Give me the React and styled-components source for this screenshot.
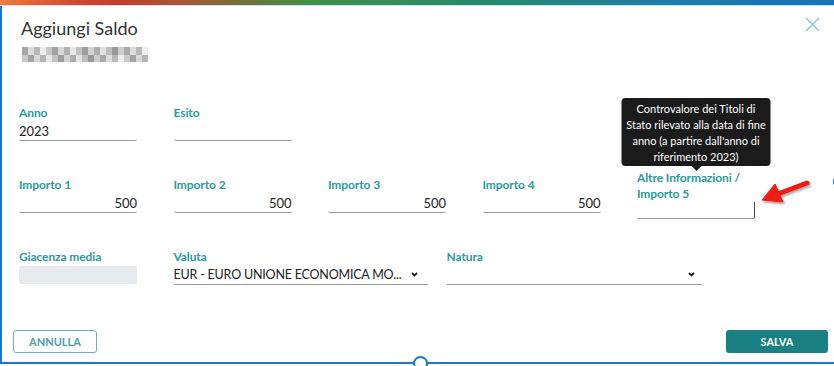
import React from 'react'
import styled, { createGlobalStyle } from 'styled-components'

// pixelated (blurred) subtitle cells, 2 rows x 21 cols
const blurCells = Array.from({ length: 42 }, (_, i) => {
  const g = 150 + ((i * 53 + 17) % 90)
  return `rgb(${g}, ${g}, ${g})`
})

const Chevron = () => (
  <svg width='7' height='5' viewBox='0 0 7 5'>
    <polyline points='1,1 3.5,3.5 6,1' fill='none' stroke='#222' strokeWidth='1.8' />
  </svg>
)

const Field = ({ label, value, align, width, offset, h, caret, children }) => (
  <FieldBox $width={width} $offset={offset}>
    {children}
    <Label>{label}</Label>
    <Input $align={align} $h={h}>
      {value}
      {caret && <Caret />}
    </Input>
  </FieldBox>
)

const SelectField = ({ label, value, width, pr, ml }) => (
  <FieldBox $width={width} $ml={ml}>
    <Label>{label}</Label>
    <Select $pr={pr}>
      <SelectText>{value}</SelectText>
      <Chevron />
    </Select>
  </FieldBox>
)

export default function App() {
  return (
    <>
      <GlobalStyle />
      <Page>
        <Frame>
          <TopBar />
          <Header>
            <div>
              <Title>Aggiungi Saldo</Title>
              <Blurred>
                {blurCells.map((c, i) => (
                  <Cell key={i} style={{ background: c }} />
                ))}
              </Blurred>
            </div>
            <CloseButton>
              <svg width='15' height='15' viewBox='0 0 15 15'>
                <path d='M1 1 L14 14 M14 1 L1 14' stroke='#8fd0d0' strokeWidth='1.6' />
              </svg>
            </CloseButton>
          </Header>
          <Body>
            <Row $mt={43}>
              <Field label='Anno' value='2023' />
              <Field label='Esito' />
            </Row>
            <Row $mt={29}>
              {[1, 2, 3, 4].map(n => (
                <Field key={n} label={`Importo ${n}`} value='500' align='right' offset={7} />
              ))}
              <Field
                label={
                  <>
                    Altre Informazioni /<br />
                    Importo 5
                  </>
                }
                align='right'
                h={16}
                caret
              >
                <Tooltip>
                  Controvalore dei Titoli di Stato rilevato alla data di fine anno (a partire
                  dall'anno di riferimento 2023)
                </Tooltip>
              </Field>
            </Row>
            <Row $mt={30}>
              <FieldBox>
                <Label>Giacenza media</Label>
                <Disabled />
              </FieldBox>
              <SelectField label='Valuta' value='EUR - EURO UNIONE ECONOMICA MO...' width={254} pr={10} />
              <SelectField label='Natura' value='' width={255} pr={7} ml={-17.5} />
            </Row>
          </Body>
          <Footer>
            <OutlineButton>ANNULLA</OutlineButton>
            <PrimaryButton>SALVA</PrimaryButton>
          </Footer>
          <RedArrow width='60' height='40' viewBox='0 0 60 40'>
            <defs>
              <filter id='sh' x='-20%' y='-20%' width='160%' height='160%'>
                <feDropShadow dx='1.5' dy='2' stdDeviation='1.2' floodColor='#000' floodOpacity='0.35' />
              </filter>
            </defs>
            <g filter='url(#sh)' fill='#ee1c14' stroke='#ee1c14'>
              <line x1='52' y1='10' x2='24' y2='20.5' strokeWidth='5' strokeLinecap='round' />
              <polygon points='7,27 20,11 28,29' strokeWidth='1' strokeLinejoin='round' />
            </g>
          </RedArrow>
          <Handle $pos='bottom' />
          <Handle $pos='right' />
        </Frame>
      </Page>
    </>
  )
}

const GlobalStyle = createGlobalStyle`
  body {
    margin: 0;
    background: #fff;
    font-family: Lato, 'Open Sans', sans-serif;
  }
`

const Page = styled.div`
  width: 834px;
  height: 366px;
  overflow: hidden;
  background: #fff;
`

const Frame = styled.div`
  position: relative;
  box-sizing: border-box;
  width: 840px;
  height: 364px;
  display: flex;
  flex-direction: column;
  border-left: 2px solid #1a79c6;
  border-right: 2px solid #1a79c6;
  border-bottom: 2px solid #1a79c6;
  background: #fff;
`

const TopBar = styled.div`
  height: 5px;
  margin-left: -2px;
  margin-right: -2px;
  border-bottom: 1px solid #cfe4f4;
  background: linear-gradient(
    to right,
    #f07a3c 0%,
    #d04a30 9%,
    #c23c2c 14%,
    #a65838 22%,
    #7a6c3a 28%,
    #3f9048 37%,
    #26896f 60%,
    #1c7fa4 78%,
    #1571c0 100%
  );
`

const Header = styled.div`
  display: flex;
  align-items: flex-start;
  justify-content: space-between;
  padding: 11px 18px 0 19px;
`

const Title = styled.h1`
  margin: 0;
  font-size: 18px;
  line-height: 22px;
  font-weight: 400;
  color: #333;
`

const Blurred = styled.div`
  display: grid;
  grid-template-columns: repeat(21, 6px);
  grid-auto-rows: 7.5px;
  margin-top: 8px;
  margin-left: 1px;
`

const Cell = styled.span`
  display: block;
`

const CloseButton = styled.div`
  margin-top: -1px;
  width: 15px;
  height: 15px;
`

const Body = styled.div`
  padding: 0 17px;
`

const Row = styled.div`
  display: flex;
  align-items: flex-start;
  gap: 36.5px;
  margin-top: ${p => p.$mt}px;
`

const FieldBox = styled.div`
  position: relative;
  flex: none;
  width: ${p => p.$width || 118}px;
  margin-top: ${p => p.$offset || 0}px;
  margin-left: ${p => p.$ml || 0}px;
`

const Label = styled.div`
  font-size: 12px;
  line-height: 16px;
  font-weight: 700;
  color: #2c9a9d;
  letter-spacing: -0.1px;
`

const Input = styled.div`
  box-sizing: border-box;
  height: ${p => (p.$h || 19) + 1}px;
  display: flex;
  align-items: center;
  justify-content: ${p => (p.$align === 'right' ? 'flex-end' : 'flex-start')};
  border-bottom: 1px solid #9b9b9b;
  border-radius: 0 0 2px 2px;
  font-size: 13px;
  color: #222;
`

const Caret = styled.span`
  display: block;
  width: 1px;
  height: 16px;
  background: #444;
`

const Disabled = styled.div`
  height: 18px;
  margin-top: 1px;
  border-radius: 2px;
  background: #e8ebed;
`

const Select = styled.div`
  box-sizing: border-box;
  height: 20px;
  display: flex;
  align-items: center;
  justify-content: space-between;
  padding-right: ${p => p.$pr}px;
  border-bottom: 1px solid #9b9b9b;
  font-size: 12.5px;
  color: #222;
`

const SelectText = styled.span`
  white-space: nowrap;
  letter-spacing: -0.2px;
`

const Tooltip = styled.div`
  position: absolute;
  left: 50%;
  bottom: calc(100% + 4px);
  transform: translateX(-50%);
  box-sizing: border-box;
  width: 149px;
  padding: 3px 3px 1px;
  border-radius: 4px;
  background: #1b1b1b;
  color: #fff;
  font-size: 11px;
  line-height: 16px;
  text-align: center;
  &::after {
    content: '';
    position: absolute;
    top: 100%;
    left: 50%;
    margin-left: -5px;
    border: 5px solid transparent;
    border-top-color: #1b1b1b;
  }
`

const Footer = styled.div`
  display: flex;
  justify-content: space-between;
  align-items: center;
  margin-top: auto;
  padding: 0 10px 9px 11px;
`

const OutlineButton = styled.button`
  box-sizing: border-box;
  width: 84px;
  height: 23px;
  border: 1px solid #6fb5b7;
  border-radius: 3px;
  background: #fff;
  color: #4aa3a6;
  font-family: Lato, sans-serif;
  font-size: 11px;
  font-weight: 700;
`

const PrimaryButton = styled.button`
  box-sizing: border-box;
  width: 102px;
  height: 23px;
  border: none;
  border-radius: 3px;
  background: #1a8082;
  color: #fff;
  font-family: Lato, sans-serif;
  font-size: 11px;
  font-weight: 700;
`

const RedArrow = styled.svg`
  position: absolute;
  left: 753px;
  top: 173px;
`

const Handle = styled.span`
  position: absolute;
  box-sizing: border-box;
  width: 15px;
  height: 15px;
  border: 2px solid #1a79c6;
  border-radius: 50%;
  background: #fff;
  ${p =>
    p.$pos === 'bottom'
      ? 'left: 411px; bottom: -8.5px;'
      : 'right: -9.5px; top: 174px;'}
`
